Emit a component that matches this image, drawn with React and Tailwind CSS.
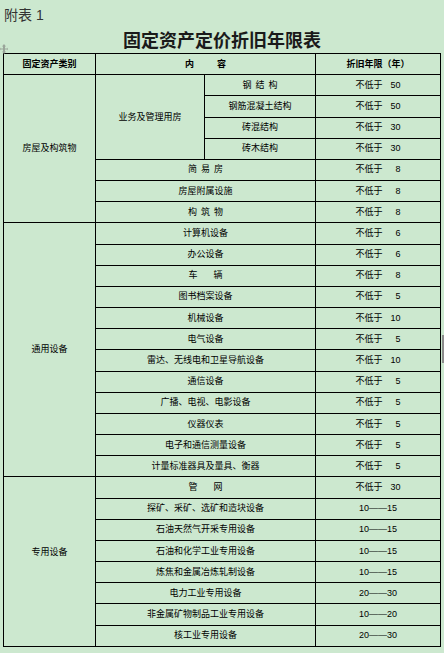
import React from 'react';

const cell = 'flex items-center justify-center bg-[#cce8cf] text-[9px] leading-none text-black';

const houses = [
  { name: ['钢', '结', '构'], gap: 'gap-[4px]', years: '50' },
  { name: '钢筋混凝土结构', years: '50' },
  { name: '砖混结构', years: '30' },
  { name: '砖木结构', years: '30' },
];

const houseOther = [
  { name: ['简', '易', '房'], gap: 'gap-[4px]', years: '8' },
  { name: '房屋附属设施', years: '8' },
  { name: ['构', '筑', '物'], gap: 'gap-[4px]', years: '8' },
];

const general = [
  { name: '计算机设备', years: '6' },
  { name: '办公设备', years: '6' },
  { name: ['车', '辆'], gap: 'gap-[16px]', years: '8' },
  { name: '图书档案设备', years: '5' },
  { name: '机械设备', years: '10' },
  { name: '电气设备', years: '5' },
  { name: '雷达、无线电和卫星导航设备', years: '10' },
  { name: '通信设备', years: '5' },
  { name: '广播、电视、电影设备', years: '5' },
  { name: '仪器仪表', years: '5' },
  { name: '电子和通信测量设备', years: '5' },
  { name: '计量标准器具及量具、衡器', years: '5' },
];

const special = [
  { name: ['管', '网'], gap: 'gap-[16px]', years: '30' },
  { name: '探矿、采矿、选矿和造块设备', range: '10——15' },
  { name: '石油天然气开采专用设备', range: '10——15' },
  { name: '石油和化学工业专用设备', range: '10——15' },
  { name: '炼焦和金属冶炼轧制设备', range: '10——15' },
  { name: '电力工业专用设备', range: '20——30' },
  { name: '非金属矿物制品工业专用设备', range: '10——20' },
  { name: '核工业专用设备', range: '20——30' },
];

function Label({ name, gap }) {
  if (Array.isArray(name)) {
    return (
      <span className={`flex ${gap}`}>
        {name.map((c, i) => (
          <span key={i}>{c}</span>
        ))}
      </span>
    );
  }
  return <span>{name}</span>;
}

function Years({ item }) {
  if (item.range) return <div className={cell}>{item.range}</div>;
  return (
    <div className={cell}>
      <span className="flex w-[45px]">
        <span>不低于</span>
        <span className="flex-1 text-right">{item.years}</span>
      </span>
    </div>
  );
}

function WideRow({ item }) {
  return (
    <>
      <div className={`${cell} col-span-2`}>
        <Label name={item.name} gap={item.gap} />
      </div>
      <Years item={item} />
    </>
  );
}

export default function App() {
  return (
    <div
      className="relative h-[653px] w-[444px] overflow-hidden bg-[#cce8cf]"
      style={{ fontFamily: "'Liberation Sans', 'Noto Sans CJK SC', sans-serif" }}
    >
      <div className="pl-[4px] pt-[7px] text-[14px] leading-[16px] text-[#333]">附表 1</div>
      <div className="mt-[8px] text-center text-[18px] font-bold leading-[20px] text-[#1a1a1a]">
        固定资产定价折旧年限表
      </div>

      {/* table move handle */}
      <svg className="absolute left-0 top-[44px]" width="8" height="10" viewBox="0 0 8 10" fill="#9aa59a">
        <path d="M4 0 L6 2.5 H5 V4.5 H7 V3.5 L8 5 L7 6.5 V5.5 H5 V7.5 H6 L4 10 L2 7.5 H3 V5.5 H1 V6.5 L0 5 L1 3.5 V4.5 H3 V2.5 H2 Z" />
      </svg>

      <div className="mx-auto mt-[2px] grid w-[438px] grid-cols-[91px_108px_110px_124px] grid-rows-[repeat(28,20.18px)] gap-px bg-black p-px">
        <div className={`${cell} font-bold`}>固定资产类别</div>
        <div className={`${cell} col-span-2 font-bold`}>
          <span className="flex gap-[23px]">
            <span>内</span>
            <span>容</span>
          </span>
        </div>
        <div className={`${cell} font-bold`}>折旧年限（年）</div>

        <div className={`${cell} row-span-7`}>房屋及构筑物</div>
        <div className={`${cell} row-span-4`}>业务及管理用房</div>
        <div className={cell}>
          <Label name={houses[0].name} gap={houses[0].gap} />
        </div>
        <Years item={houses[0]} />
        {houses.slice(1).map((h, i) => (
          <React.Fragment key={i}>
            <div className={cell}>
              <Label name={h.name} gap={h.gap} />
            </div>
            <Years item={h} />
          </React.Fragment>
        ))}
        {houseOther.map((h, i) => (
          <WideRow key={i} item={h} />
        ))}

        <div className={`${cell} row-span-12`}>通用设备</div>
        {general.map((g, i) => (
          <WideRow key={i} item={g} />
        ))}

        <div className={`${cell} row-span-8 pb-[19px]`}>专用设备</div>
        {special.map((s, i) => (
          <WideRow key={i} item={s} />
        ))}
      </div>

      <div className="absolute left-[442px] top-[335px] h-[28px] w-[2px] bg-[#8c8c8c]" />
    </div>
  );
}
